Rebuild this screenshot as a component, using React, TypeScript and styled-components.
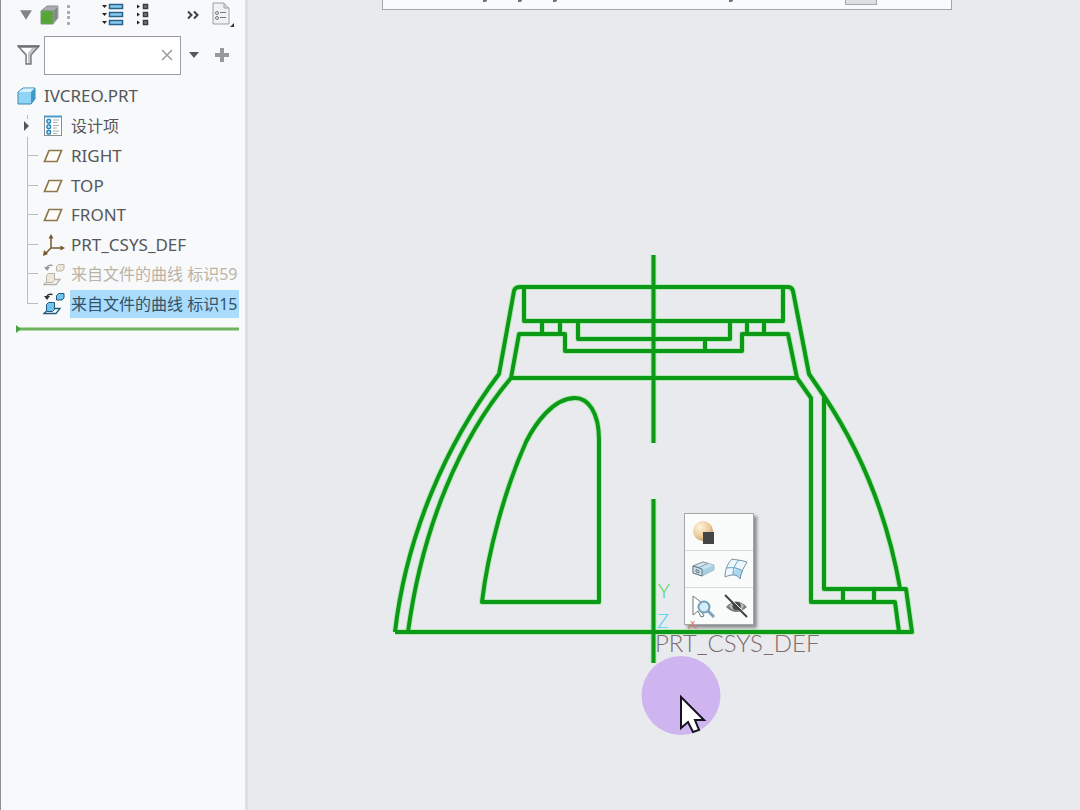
import React from 'react';
import styled, { createGlobalStyle } from 'styled-components';

const Global = createGlobalStyle`
  * { box-sizing: border-box; }
  body { margin: 0; font-family: "Noto Sans", "Noto Sans CJK SC", sans-serif; color: #55575a; }
  button { font: inherit; color: inherit; border: 0; padding: 0; background: none; }
  svg { display: block; }
`;

const Page = styled.div`
  display: flex;
  min-height: 100vh;
  background: #e8eaee;
`;

const Sidebar = styled.aside`
  width: 248px;
  flex: none;
  background: #f7f9fb;
  border-left: 1px solid #8e9093;
  border-right: 3px solid #dcdfe3;
`;

const TreeToolbar = styled.div`
  display: flex;
  align-items: center;
  height: 30px;
  padding-left: 16px;
`;

const IconButton = styled.button<{ $gap?: number }>`
  flex: none;
  margin-left: ${(p) => p.$gap ?? 0}px;
`;

const FilterBar = styled.div`
  display: flex;
  align-items: center;
  height: 50px;
  padding-left: 16px;
`;

const SearchBox = styled.div`
  display: flex;
  align-items: center;
  width: 137px;
  height: 39px;
  margin-left: 4px;
  padding-right: 7px;
  background: #fff;
  border: 1px solid #9a9c9f;
`;

const SearchInput = styled.input`
  flex: 1;
  min-width: 0;
  height: 100%;
  padding: 0 6px;
  border: 0;
  outline: 0;
  background: transparent;
  font: inherit;
`;

const Tree = styled.ul`
  list-style: none;
  margin: 0;
  padding: 1px 6px 0 15px;
`;

const TreeRow = styled.li<{ $cjk?: boolean }>`
  display: flex;
  align-items: center;
  height: 30px;
  overflow: hidden;
  white-space: nowrap;
  font-size: ${(p) => (p.$cjk ? 16 : 17)}px;
  line-height: 28px;
`;

const Branches = styled.ul`
  list-style: none;
  margin: 0;
  padding: 0;
`;

const BranchRow = styled(TreeRow)`
  &:nth-child(even) { height: 29px; }
`;

const RowIcon = styled.span`
  flex: none;
  width: 28px;
  padding-left: 1px;
`;

const Guide = styled.span<{ $last?: boolean }>`
  align-self: stretch;
  flex: none;
  width: 22px;
  margin-right: 4px;
  display: grid;
  grid-template-rows: 1fr 1fr;
  padding-left: 11px;
  &::before {
    content: '';
    border-left: 1px solid #b9bdc0;
    border-bottom: 1px solid #b9bdc0;
  }
  &::after {
    content: '';
    border-left: ${(p) => (p.$last ? 0 : 1)}px solid #b9bdc0;
  }
`;

const Expander = styled.button`
  display: flex;
  flex-direction: column;
  flex: none;
  width: 26px;
  height: 30px;
  padding-left: 7px;
  &::before, &::after {
    content: '';
    flex: 1;
    margin-left: 4px;
    border-left: 1px solid #b9bdc0;
  }
  &::before { margin-top: 4px; margin-bottom: 1px; }
  &::after { margin-top: 5px; }
`;

const Label = styled.span<{ $state?: 'dim' | 'selected' }>`
  flex: 1;
  min-width: 0;
  overflow: hidden;
  padding-left: 1px;
  color: ${(p) => (p.$state === 'dim' ? '#bdb3a5' : p.$state === 'selected' ? '#34526a' : 'inherit')};
  background: ${(p) => (p.$state === 'selected' ? '#aadcfb' : 'none')};
`;

const InsertMarker = styled.svg`
  width: 223px;
  height: 10px;
  margin-top: 6px;
  margin-left: 15px;
`;

const Viewport = styled.main`
  flex: 1;
  min-width: 0;
  position: relative;
  overflow: hidden;
`;

const GraphicsBar = styled.div`
  display: flex;
  width: 570px;
  height: 10px;
  margin-left: 134px;
  padding-left: 96px;
  background: #f8fafc;
  border: 1px solid #a4a7ac;
  border-top: 0;
`;

const BarTick = styled.i<{ $gap: number }>`
  flex: none;
  width: 4px;
  height: 2px;
  margin-left: ${(p) => p.$gap}px;
  background: #6d7074;
  border-radius: 0 0 2px 0;
`;

const BarButton = styled.button`
  width: 32px;
  height: 5px;
  margin-left: 112px;
  background: #dddfe3;
  border: 1px solid #a4a7ac;
  border-top: 0;
`;

const Model = styled.svg`
  position: absolute;
  left: 132px;
  top: 240px;
  width: 560px;
  height: 440px;
`;

const MiniToolbar = styled.div`
  position: absolute;
  left: 436px;
  top: 513px;
  width: 70px;
  border: 1px solid #a4a6a8;
  background: #fafbfb;
  box-shadow: 3px 3px 3px #8b8d90;
`;

const MiniRow = styled.div`
  display: flex;
  align-items: center;
  gap: 8px;
  height: 36px;
  padding-left: 6px;
  & + & { border-top: 1px solid #d8dadc; height: 37px; }
`;

/* The axis letter shows only its foot along the toolbar's lower edge. */
const AxisLabel = styled.span`
  position: absolute;
  left: 439px;
  top: 621px;
  height: 8px;
  display: flex;
  align-items: flex-end;
  overflow: hidden;
  font: 300 18px/12px Lato, sans-serif;
  color: #f0704f;
`;

const Pointer = styled.svg`
  position: absolute;
  left: 392px;
  top: 655px;
  width: 82px;
  height: 82px;
`;

const Caret = ({ w = 10, color = '#58595b' }: { w?: number; color?: string }) => (
  <svg width={w} height={w} viewBox="0 0 10 10"><path d={w > 10 ? 'M0 1h10L5 9z' : 'M0 2h10L5 8z'} fill={color} /></svg>
);

const GreenCube = () => (
  <svg width="20" height="20" viewBox="0 0 20 20">
    <path d="M1 6l6-5h11l-5 5z" fill="#a9acad" stroke="#8a8c8d" />
    <path d="M13 6l5-5v12l-5 6z" fill="#858889" stroke="#a9acad" />
    <path d="M1 6h12v13H1z" fill="#55a634" stroke="#7d9873" />
  </svg>
);

const Dots = () => (
  <svg width="4" height="20" viewBox="0 0 4 20" fill="#a2a5a8">
    {[0, 6, 11, 17].map((y) => <rect key={y} x="0" y={y} width="3" height="3" rx="1" />)}
  </svg>
);

const ExpandAll = () => (
  <svg width="22" height="24" viewBox="0 0 22 24">
    {[1, 9, 17].map((y) => (
      <g key={y}>
        <path d={`M0 ${y + 1}h5l-2.500 3z`} fill="#222" />
        <rect x="7.500" y={y + 0.5} width="13" height="4" fill="#8ccbf0" stroke="#27638c" strokeWidth="1.500" />
      </g>
    ))}
  </svg>
);

const CollapseAll = () => (
  <svg width="12" height="24" viewBox="0 0 12 24">
    {[1, 9, 17].map((y) => (
      <g key={y}>
        <path d={`M0 ${y + 0.5}v4l3-2z`} fill="#222" />
        <rect x="6.500" y={y + 0.5} width="4" height="4" fill="#777" stroke="#3c3c3c" strokeWidth="1.500" />
      </g>
    ))}
  </svg>
);

const Chevrons = () => (
  <svg width="12" height="10" viewBox="0 0 12 10" fill="none" stroke="#3f4143" strokeWidth="2">
    <path d="M1 1.500l3.500 3.500L1 8.500M7 1.500l3.500 3.500L7 8.500" />
  </svg>
);

const SettingsSheet = () => (
  <svg width="23" height="26" viewBox="0 0 23 26">
    <path d="M1 1h11l5 5v16H1z" fill="#f0f1f2" stroke="#9da0a3" />
    <path d="M12 1v5h5" fill="#d6d8da" stroke="#9da0a3" />
    <circle cx="5" cy="11" r="1.500" fill="none" stroke="#777a7d" />
    <circle cx="5" cy="16" r="1.500" fill="none" stroke="#777a7d" />
    <path d="M8 10.500h6M8 15.500h6" stroke="#777a7d" />
    <path d="M22 21v4h-4z" fill="#333" />
  </svg>
);

const Funnel = () => (
  <svg width="23" height="21" viewBox="0 0 23 21">
    <path d="M1 1h21l-8 9v9H9v-9z" fill="#c4c6c7" stroke="#77797b" strokeWidth="1.400" />
    <path d="M4 3h11l-4 5v10h-1V9z" fill="#fff" />
    <path d="M1 1.500h21" stroke="#6c6e70" strokeWidth="2" />
  </svg>
);

const PartIcon = () => (
  <svg width="19" height="18" viewBox="0 0 19 18">
    <path d="M1 5l5-4h12v11l-4 5H1z" fill="#8ed5f5" stroke="#3d87ad" />
    <path d="M1.500 5l5-3.500h11L14 5z" fill="#d6f1fc" />
    <path d="M14 5l4-4v11l-4 5z" fill="#3d9bcb" />
  </svg>
);

const DesignItems = () => (
  <svg width="20" height="22" viewBox="0 0 20 22">
    <rect x="1.500" y="1.500" width="17" height="19" fill="#fff" stroke="#8b8e90" />
    <path d="M1 1.500h18" stroke="#4b9ccb" strokeWidth="2" />
    {[4.5, 10, 15.5].map((y) => (
      <g key={y}>
        <rect x="4" y={y} width="3.500" height="3.500" rx="1" fill="#d8eef9" stroke="#2787b9" strokeWidth="1.500" />
        <path d={`M10 ${y + 0.5}h6M10 ${y + 3}h4`} stroke="#a7aaac" />
      </g>
    ))}
  </svg>
);

const DatumPlane = () => (
  <svg width="20" height="14" viewBox="0 0 20 14">
    <path d="M6 1.500h12.500L14 12.500H1.500z" fill="#fdfcf8" stroke="#8e774c" strokeWidth="1.700" />
  </svg>
);

const Csys = () => (
  <svg width="22" height="22" viewBox="0 0 22 22">
    <path d="M8 3v11h11M8 14l-6 6" fill="none" stroke="#77592e" strokeWidth="1.500" />
    <path d="M5.500 4.500L8 0l2.500 4.500zM17.500 11.500L22 14l-4.500 2.500zM1 16l4 4-5 2z" fill="#77592e" />
  </svg>
);

const CurveFile = ({ dim }: { dim?: boolean }) => {
  const line = dim ? '#bbb4a9' : '#24597a';
  const fill = dim ? '#eee7dc' : '#71c4ee';
  const arrow = dim ? '#9b9a98' : '#333';
  return (
    <svg width="22" height="23" viewBox="0 0 22 23" fill="none" stroke={line}>
      <path d="M13.500 3.500l2-2h5.500v4.500l-2 2h-5.500z" fill={fill} />
      <path d="M9.500 2.500C6 1.500 4 3 4 5" stroke={arrow} strokeWidth="1.500" />
      <path d="M1 4h6l-3 4z" fill={arrow} stroke="none" />
      <path d="M3.500 12.500l2-2h6v7l-2 2h-6z" fill={fill} />
      <path d="M12 16.500h5l-4 5H1l2-2" strokeWidth="1.300" />
    </svg>
  );
};

const items: { name: string; icon: React.ReactNode; state?: 'dim' | 'selected' }[] = [
  { name: 'RIGHT', icon: <DatumPlane /> },
  { name: 'TOP', icon: <DatumPlane /> },
  { name: 'FRONT', icon: <DatumPlane /> },
  { name: 'PRT_CSYS_DEF', icon: <Csys /> },
  { name: '来自文件的曲线 标识59', icon: <CurveFile dim />, state: 'dim' },
  { name: '来自文件的曲线 标识15', icon: <CurveFile />, state: 'selected' },
];

const outline = [
  'M395 632H912L906 589H824V396',
  'M395 632C406 536 446 444 499 374L514 291Q515 287 520 287H788Q792 287 793 291L809 374L824 396C862 453 888 520 900 588',
  'M408 632C422 528 460 438 511 378L519 334H565V351H742V334H788L797 378L811 398V602H895L899 632',
  'M511 378H797',
  'M524 288V321H783V288',
  'M542 321V334M560 321V334M578 321V339H730V321M747 321V334M764 321V334M705 339V351',
  'M843 589V602M874 589V602',
  'M482 602H599V440C599 412 588 398 575 398C553 398 535 424 526 442C505 489 488 551 482 602Z',
  'M653.5 255V443M653.5 499V663',
];

export default function App() {
  return (
    <Page>
      <Global />
      <Sidebar>
        <TreeToolbar>
          <IconButton $gap={3} aria-label="Model tree menu"><Caret w={12} color="#828486" /></IconButton>
          <IconButton $gap={8} aria-label="Model"><GreenCube /></IconButton>
          <IconButton $gap={7} aria-label="Handle"><Dots /></IconButton>
          <IconButton $gap={31} aria-label="Expand all"><ExpandAll /></IconButton>
          <IconButton $gap={13} aria-label="Collapse all"><CollapseAll /></IconButton>
          <IconButton $gap={38} aria-label="More"><Chevrons /></IconButton>
          <IconButton $gap={13} aria-label="Settings"><SettingsSheet /></IconButton>
        </TreeToolbar>
        <FilterBar>
          <IconButton aria-label="Filter"><Funnel /></IconButton>
          <SearchBox>
            <SearchInput aria-label="Search tree" />
            <IconButton aria-label="Clear">
              <svg width="12" height="12" viewBox="0 0 12 12" stroke="#9a9c9f" strokeWidth="1.500"><path d="M1 1l10 10M11 1L1 11" /></svg>
            </IconButton>
          </SearchBox>
          <IconButton $gap={8} aria-label="Search options"><Caret /></IconButton>
          <IconButton $gap={15} aria-label="Add">
            <svg width="16" height="16" viewBox="0 0 16 16" stroke="#97999c" strokeWidth="4"><path d="M8 1v14M1 8h14" /></svg>
          </IconButton>
        </FilterBar>
        <Tree>
          <TreeRow><RowIcon><PartIcon /></RowIcon>IVCREO.PRT</TreeRow>
          <TreeRow $cjk>
            <Expander aria-label="Expand"><svg width="7" height="12" viewBox="0 0 7 12"><path d="M1 1v10l5-5z" fill="#55575a" /></svg></Expander>
            <RowIcon><DesignItems /></RowIcon>
            <Label>设计项</Label>
          </TreeRow>
          <li>
            <Branches>
              {items.map((it, i) => (
                <BranchRow key={it.name} $cjk={!!it.state}>
                  <Guide $last={i === items.length - 1} />
                  <RowIcon>{it.icon}</RowIcon>
                  <Label $state={it.state}>{it.name}</Label>
                </BranchRow>
              ))}
            </Branches>
          </li>
        </Tree>
        <InsertMarker viewBox="0 0 223 10">
          <path d="M0 5h223" stroke="#6fb55f" strokeWidth="3" />
          <path d="M0 1v8l5-4z" fill="#4ea044" />
        </InsertMarker>
      </Sidebar>
      <Viewport>
        <GraphicsBar>
          <BarTick $gap={4} /><BarTick $gap={31} /><BarTick $gap={31} /><BarTick $gap={172} />
          <BarButton aria-label="Display style" />
        </GraphicsBar>
        <Model viewBox="380 240 560 440">
          <g fontFamily="Lato, sans-serif" fontWeight="300">
            <text x="655" y="652" fontSize="24" fill="#7f6a6c">PRT_CSYS_DEF</text>
            <text x="658" y="598" fontSize="20" fill="#3fd455">Y</text>
            <text x="657" y="628" fontSize="20" fill="#45d3f2">Z</text>
          </g>
          <g fill="none" stroke="#b4e8b8" strokeWidth="6" strokeLinejoin="round">{outline.map((d) => <path key={d} d={d} />)}</g>
          <g fill="none" stroke="#0c9a16" strokeWidth="4" strokeLinejoin="round">{outline.map((d) => <path key={d} d={d} />)}</g>
        </Model>
        <MiniToolbar>
          <MiniRow>
            <IconButton aria-label="Appearance">
              <svg width="25" height="25" viewBox="0 0 25 25">
                <defs><radialGradient id="ball" cx=".35" cy=".3" r=".8"><stop offset="0" stopColor="#fff4dc" /><stop offset=".6" stopColor="#eccb9b" /><stop offset="1" stopColor="#b98d55" /></radialGradient></defs>
                <circle cx="12" cy="11" r="10" fill="url(#ball)" />
                <path d="M12 12h11v12H12z" fill="#454545" />
              </svg>
            </IconButton>
          </MiniRow>
          <MiniRow>
            <IconButton aria-label="Extrude">
              <svg width="25" height="20" viewBox="0 0 25 20" strokeLinejoin="round">
                <path d="M2 7l10-4 11 3v5l-12 6-9-3z" fill="#a6cee4" stroke="#a9bcc8" />
                <path d="M2 7l10-4 5 1.500L8 8.500z" fill="#d5e7f0" stroke="#8798a3" />
                <path d="M8 9l9-4 6 1.500-12 4.500z" fill="#c5e2f1" />
                <path d="M2 7l9 3v7l-9-3zM5 10.500l3 1v2.500l-3-1z" fill="#cfe3ee" stroke="#65747e" />
              </svg>
            </IconButton>
            <IconButton aria-label="Surface">
              <svg width="24" height="24" viewBox="0 0 24 24" fill="none">
                <path d="M1 20C1 12 4 6 8 2c4 1 9 1 15 3-3 5-6 10-7 17-3-5-8-5-15-2z" fill="#eef8fc" />
                <path d="M12 12c3 0 5 1 7 2-2 3-2 5-3 8-2-3-4-4-7-4 0-2 1-4 3-6z" fill="#a9d9ef" />
                <path d="M1 20C1 12 4 6 8 2c4 1 9 1 15 3-3 5-6 10-7 17-3-5-8-5-15-2z" stroke="#7592a2" />
                <path d="M3 11c6-1 11 0 16 3M15 3c-4 4-6 9-6 15" stroke="#5d9dbd" />
              </svg>
            </IconButton>
          </MiniRow>
          <MiniRow>
            <IconButton aria-label="Query select">
              <svg width="25" height="25" viewBox="0 0 25 25" fill="none">
                <path d="M2 2v19l5-4 3 6 3-1-3-6 9-1z" stroke="#70777e" fill="#fff" />
                <circle cx="13" cy="13" r="5.500" fill="#d5edf8" stroke="#6f9fb9" strokeWidth="2" />
                <path d="M17 17l6 6" stroke="#7fa3bb" strokeWidth="3" />
              </svg>
            </IconButton>
            <IconButton aria-label="Hide">
              <svg width="25" height="25" viewBox="0 0 25 25">
                <path d="M2 13Q12 2 23 13Q12 23 2 13z" fill="#7b7e80" />
                <path d="M5 12q2-3 4-3-1 4 1 7-3-1-5-4zM16 9q3 1 4 3-1 3-4 4 2-4 0-7z" fill="#b9bbbc" />
                <circle cx="12.500" cy="12" r="4" fill="#484a4c" />
                <path d="M2 0l22 22" stroke="#fafbfb" strokeWidth="1" />
                <path d="M1 1l22 22" stroke="#3f4143" strokeWidth="2" />
              </svg>
            </IconButton>
          </MiniRow>
        </MiniToolbar>
        <AxisLabel>X</AxisLabel>
        <Pointer viewBox="0 0 82 82">
          <circle cx="41" cy="40.500" r="39.500" fill="#cfb5f0" />
          <path d="M41 42v31l7-6 5 10 6-2-4-10h9z" fill="#fff" stroke="#181222" strokeWidth="2" />
        </Pointer>
      </Viewport>
    </Page>
  );
}
